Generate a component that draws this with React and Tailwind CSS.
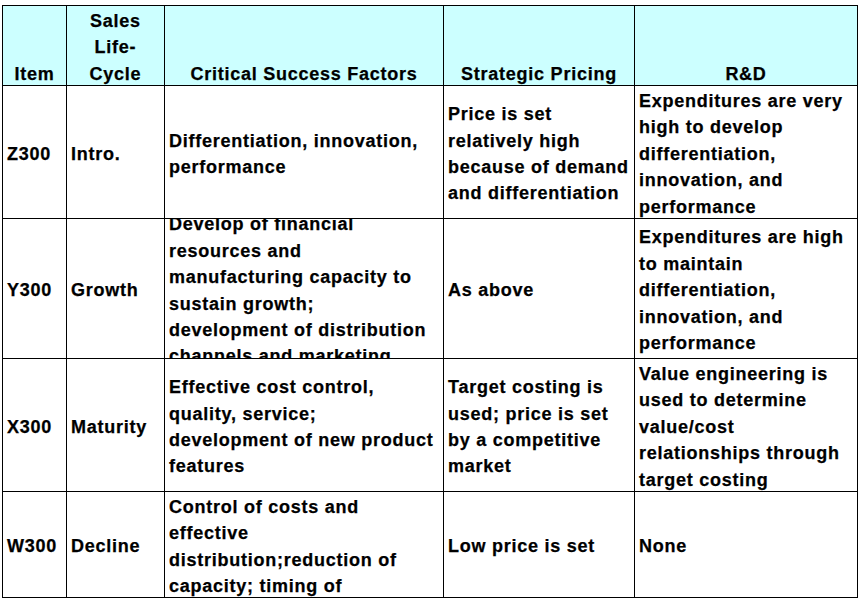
import React from "react";

const rows = [
  {
    item: "Z300",
    stage: ["Intro."],
    csf: ["Differentiation, innovation,", "performance"],
    price: ["Price is set", "relatively high", "because of demand", "and differentiation"],
    rd: ["Expenditures are very", "high to develop", "differentiation,", "innovation, and", "performance"],
    h: "h-[133px]",
  },
  {
    item: "Y300",
    stage: ["Growth"],
    csf: [
      "Develop of financial",
      "resources and",
      "manufacturing capacity to",
      "sustain growth;",
      "development of distribution",
      "channels and marketing",
    ],
    price: ["As above"],
    rd: ["Expenditures are high", "to maintain", "differentiation,", "innovation, and", "performance"],
    h: "h-[140px]",
  },
  {
    item: "X300",
    stage: ["Maturity"],
    csf: ["Effective cost control,", "quality, service;", "development of new product", "features"],
    price: ["Target costing is", "used; price is set", "by a competitive", "market"],
    rd: ["Value engineering is", "used to determine", "value/cost", "relationships through", "target costing"],
    h: "h-[133px]",
  },
  {
    item: "W300",
    stage: ["Decline"],
    csf: ["Control of costs and", "effective", "distribution;reduction of", "capacity; timing of"],
    price: ["Low price is set"],
    rd: ["None"],
    h: "h-[106px]",
  },
];

function Lines({ lines, className = "" }) {
  return (
    <div className={`flex flex-col ${className}`}>
      {lines.map((l, i) => (
        <div key={i} className="whitespace-nowrap">
          {l}
        </div>
      ))}
    </div>
  );
}

function Head({ lines }) {
  return (
    <div className="flex h-[80px] flex-col items-center justify-end overflow-hidden border-r border-b border-black bg-[#ccffff] text-center">
      <Lines lines={lines} className="-mb-[2px]" />
    </div>
  );
}

function Cell({ lines, h }) {
  return (
    <div className={`flex ${h} items-center overflow-hidden border-r border-b border-black pt-[4px] pl-[4px]`}>
      <Lines lines={lines} />
    </div>
  );
}

export default function App() {
  return (
    <div className="h-[600px] w-[863px] bg-white pl-[2px] pt-[5px]">
      <div
        className="grid w-fit grid-cols-[64px_98px_279px_191px_223px] border-t border-l border-black text-[18px] leading-[26.4px] font-bold tracking-[0.75px] text-black [-webkit-text-stroke:0.25px_black]"
        style={{ fontFamily: '"Liberation Sans", Arial, sans-serif' }}
      >
        <Head lines={["Item"]} />
        <Head lines={["Sales", "Life-", "Cycle"]} />
        <Head lines={["Critical Success Factors"]} />
        <Head lines={["Strategic Pricing"]} />
        <Head lines={["R&D"]} />
        {rows.map((r) => (
          <React.Fragment key={r.item}>
            <Cell lines={[r.item]} h={r.h} />
            <Cell lines={r.stage} h={r.h} />
            <Cell lines={r.csf} h={r.h} />
            <Cell lines={r.price} h={r.h} />
            <Cell lines={r.rd} h={r.h} />
          </React.Fragment>
        ))}
      </div>
    </div>
  );
}
